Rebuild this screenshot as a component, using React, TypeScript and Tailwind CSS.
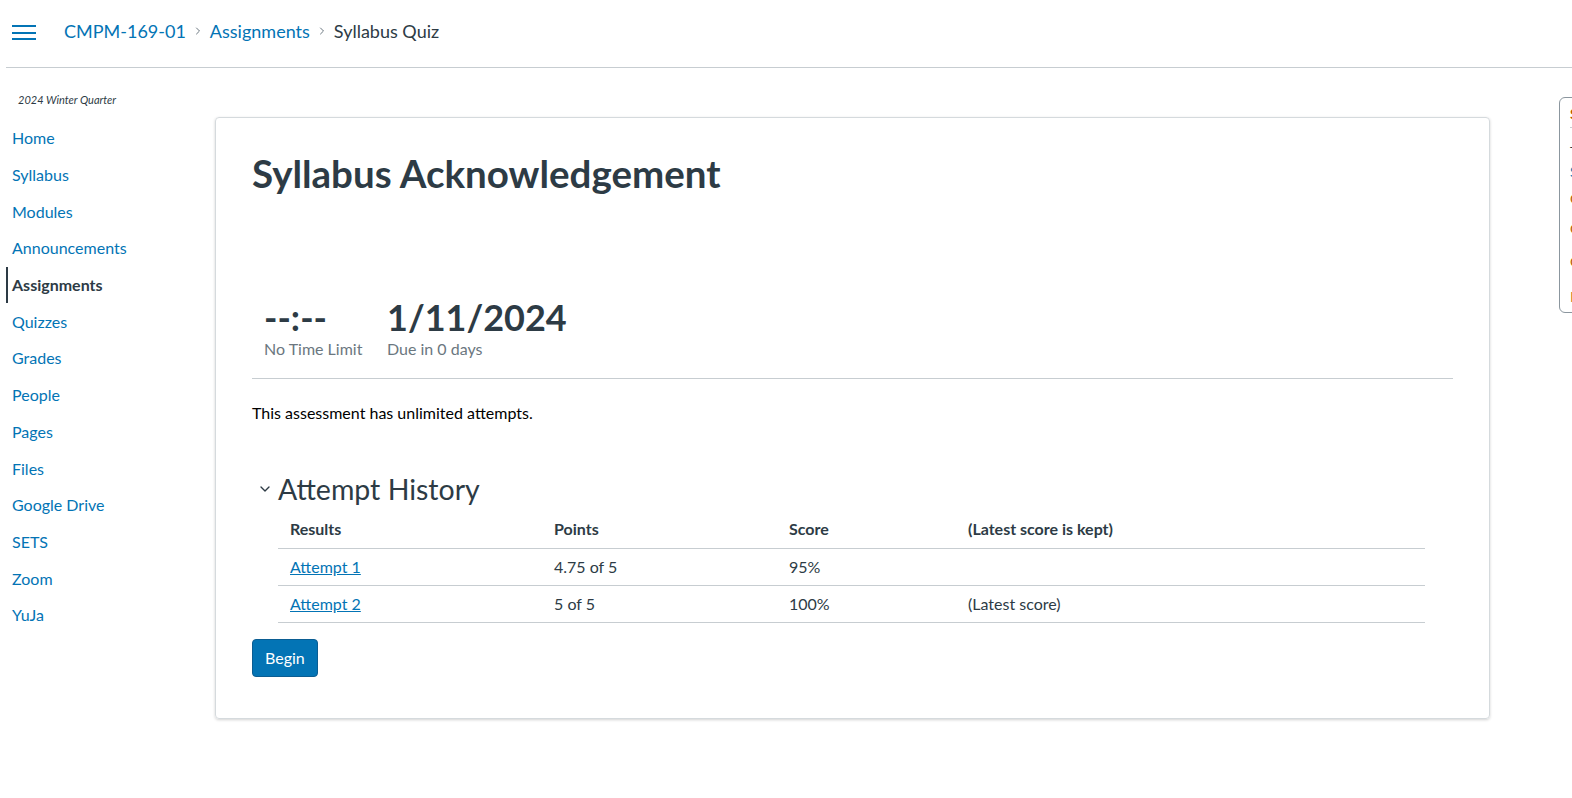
import { ChevronRight, ChevronDown } from "lucide-react";

const navItems = [
  "Home",
  "Syllabus",
  "Modules",
  "Announcements",
  "Assignments",
  "Quizzes",
  "Grades",
  "People",
  "Pages",
  "Files",
  "Google Drive",
  "SETS",
  "Zoom",
  "YuJa",
];

const attempts = [
  { name: "Attempt 1", points: "4.75 of 5", score: "95%", note: "" },
  { name: "Attempt 2", points: "5 of 5", score: "100%", note: "(Latest score)" },
];

export default function App() {
  return (
    <div className="w-full h-screen overflow-hidden bg-white text-[#2d3b45] font-['Lato','Liberation_Sans',sans-serif]">
      {/* Header */}
      <header className="ml-[6px] h-[68px] border-b border-[#c7cdd1] flex items-center">
        <button className="ml-[6px] w-[24px] flex flex-col gap-[4.5px] -mt-[2px]">
          <span className="block h-[2px] w-full bg-[#0374b5]" />
          <span className="block h-[2px] w-full bg-[#0374b5]" />
          <span className="block h-[2px] w-full bg-[#0374b5]" />
        </button>
        <nav className="ml-[28px] flex items-center text-[18px] -mt-[5px]">
          <a className="text-[#0374b5]">CMPM-169-01</a>
          <ChevronRight className="mx-[6px] w-[12px] h-[12px] text-[#6b7780]" strokeWidth={2} />
          <a className="text-[#0374b5]">Assignments</a>
          <ChevronRight className="mx-[6px] w-[12px] h-[12px] text-[#6b7780]" strokeWidth={2} />
          <span className="text-[#2d3b45]">Syllabus Quiz</span>
        </nav>
      </header>

      <div className="flex">
        {/* Sidebar */}
        <aside className="w-[215px] shrink-0 pt-[24px]">
          <div className="pl-[18px] text-[11px] italic leading-[16px] text-[#2d3b45]">
            2024 Winter Quarter
          </div>
          <ul className="mt-[12px] pl-[6px]">
            {navItems.map((item) => {
              const active = item === "Assignments";
              return (
                <li
                  key={item}
                  className={
                    "h-[36.7px] flex items-center pl-[4px] border-l-2 text-[16px] " +
                    (active
                      ? "border-[#2d3b45] font-bold text-[#2d3b45]"
                      : "border-transparent text-[#0374b5]")
                  }
                >
                  {item}
                </li>
              );
            })}
          </ul>
        </aside>

        {/* Card */}
        <main className="w-[1275px] shrink-0 mt-[49px] border border-[#d5dadd] rounded-[4px] shadow-[0_1px_3px_rgba(0,0,0,0.18)] px-[36px] pt-[33px] pb-[41px]">
          <h1 className="text-[38.5px] font-bold leading-[44px] text-[#2d3b45]">
            Syllabus Acknowledgement
          </h1>

          <div className="mt-[102px] flex pl-[12px]">
            <div className="w-[123px]">
              <div className="text-[36px] font-bold leading-[40px]">--:--</div>
              <div className="mt-[2px] text-[16px] leading-[20px] text-[#6b7780]">No Time Limit</div>
            </div>
            <div>
              <div className="text-[36px] font-bold leading-[40px]">1/11/2024</div>
              <div className="mt-[2px] text-[16px] leading-[20px] text-[#6b7780]">Due in 0 days</div>
            </div>
          </div>

          <div className="mt-[19px] border-t border-[#c7cdd1]" />

          <p className="mt-[22px] text-[16px] leading-[24px] text-black">
            This assessment has unlimited attempts.
          </p>

          <div className="mt-[47px] flex items-center">
            <ChevronDown className="ml-[5px] w-[16px] h-[16px] text-[#2d3b45]" strokeWidth={2} />
            <h2 className="ml-[5px] text-[28.5px] leading-[34px]">Attempt History</h2>
          </div>

          <table className="mt-[5px] ml-[26px] w-[1147px] text-[16px] border-collapse">
            <thead>
              <tr className="h-[37px] border-b border-[#c7cdd1]">
                <th className="w-[264px] pl-[12px] text-left font-bold">Results</th>
                <th className="w-[235px] pl-[12px] text-left font-bold">Points</th>
                <th className="w-[179px] pl-[12px] text-left font-bold">Score</th>
                <th className="pl-[12px] text-left font-bold">(Latest score is kept)</th>
              </tr>
            </thead>
            <tbody>
              {attempts.map((a) => (
                <tr key={a.name} className="h-[37px] border-b border-[#c7cdd1]">
                  <td className="pl-[12px]">
                    <a className="text-[#0374b5] underline">{a.name}</a>
                  </td>
                  <td className="pl-[12px]">{a.points}</td>
                  <td className="pl-[12px]">{a.score}</td>
                  <td className="pl-[12px]">{a.note}</td>
                </tr>
              ))}
            </tbody>
          </table>

          <button className="mt-[16px] h-[38px] px-[12px] rounded-[4px] bg-[#0374b5] border border-[#0b5d92] text-white text-[16px]">
            Begin
          </button>
        </main>

        {/* Right panel, partly off screen */}
        <div className="ml-[69px] mt-[29px] w-[300px] h-[216px] shrink-0 border border-[#8b969e] rounded-[6px] pl-[10px] pt-[6px] text-[14px]">
          <div className="font-bold text-[#b55b00] leading-[20px]">Syllabus Quiz</div>
          <div className="mt-[3px] mr-[8px] border-t border-[#c7cdd1]" />
          <div className="mt-[14px] text-[#2d3b45] leading-[20px]">Time Elapsed</div>
          <div className="text-[#0374b5] leading-[20px]">Submitted</div>
          <div className="mt-[3px] text-[#b55b00] leading-[28px]">Question 1</div>
          <div className="mt-[2px] text-[#b55b00] leading-[28px]">Question 2</div>
          <div className="mt-[5px] text-[#b55b00] leading-[28px]">Question 3</div>
          <div className="mt-[7px] text-[#c97a2a] leading-[28px]">Instructions</div>
        </div>
      </div>
    </div>
  );
}
